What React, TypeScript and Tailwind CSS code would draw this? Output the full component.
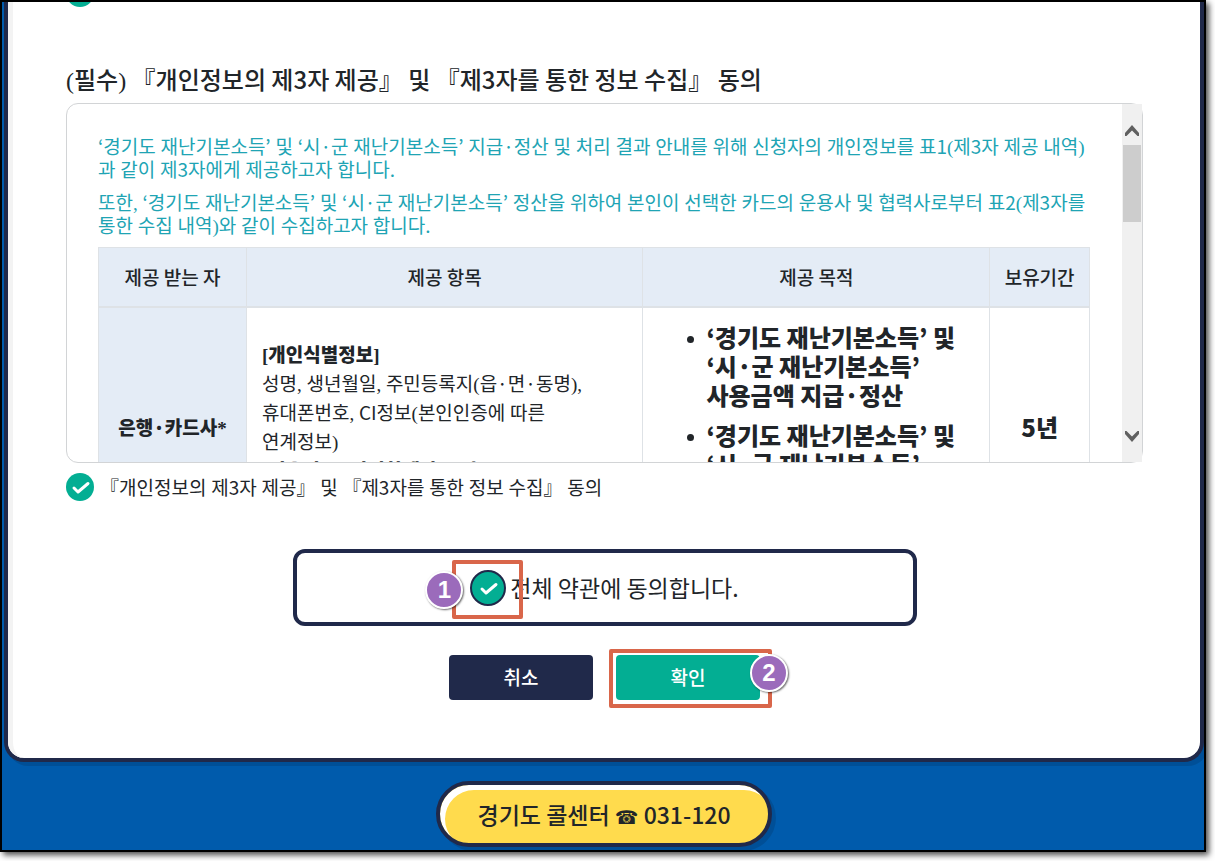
import React, { useState } from "react";

const PUNCTUATION = /([(),*[\]])/;
const PUNCTUATION_AND_SPACES = /([(),*[\] ])/;

// Brackets and commas are set in the serif face, the rest in the Korean one.
const Mixed: React.FC<{ text: string; spaces?: boolean }> = ({ text, spaces = true }) => {
  const pattern = spaces ? PUNCTUATION_AND_SPACES : PUNCTUATION;
  return (
    <>
      {text.split(pattern).map((part, i) =>
        pattern.test(part) ? (
          <span key={i} className="font-['Liberation_Serif',serif] leading-none">
            {part}
          </span>
        ) : (
          part
        )
      )}
    </>
  );
};

const StepBadge: React.FC<{ n: number; className: string }> = ({ n, className }) => (
  <span
    className={`absolute flex h-[38px] w-[38px] items-center justify-center rounded-full border-2 border-white bg-[#9b6bbb] font-['Liberation_Sans',sans-serif] text-2xl font-bold text-white shadow-[1px_1px_2px_rgba(0,0,0,0.6)] ${className}`}
  >
    {n}
  </span>
);

const CheckMark: React.FC<{ className: string }> = ({ className }) => (
  <svg viewBox="0 0 28 28" className={`pointer-events-none absolute inset-0 h-full w-full ${className}`} aria-hidden="true">
    <path d="M8 15 L12 19 L22 10.500" fill="none" stroke="white" strokeWidth="3" strokeLinecap="round" strokeLinejoin="round" />
  </svg>
);

const PURPOSES = [
  ["‘경기도 재난기본소득’ 및", "‘시·군 재난기본소득’", "사용금액 지급·정산"],
  ["‘경기도 재난기본소득’ 및", "‘시·군 재난기본소득’"],
];

const ConsentBox: React.FC = () => (
  <div className="mt-2 flex h-[360px] rounded-xl border border-[#d2d4d6]">
    <div className="min-w-0 flex-1 overflow-hidden rounded-l-xl pt-[30px] pr-8 pl-[31px]">
      <p className="leading-[23px] text-[#20a4b4]">
        <Mixed text="‘경기도 재난기본소득’ 및 ‘시·군 재난기본소득’ 지급·정산 및 처리 결과 안내를 위해 신청자의 개인정보를 표1(제3자 제공 내역)" />
        <br />
        <Mixed text="과 같이 제3자에게 제공하고자 합니다." />
      </p>
      <p className="mt-2.5 leading-[23px] text-[#20a4b4]">
        <Mixed text="또한, ‘경기도 재난기본소득’ 및 ‘시·군 재난기본소득’ 정산을 위하여 본인이 선택한 카드의 운용사 및 협력사로부터 표2(제3자를" />
        <br />
        <Mixed text="통한 수집 내역)와 같이 수집하고자 합니다." />
      </p>
      <table className="mt-[11px] w-full table-fixed border-collapse border border-[#dee2e6] leading-[29px]">
        <colgroup>
          <col className="w-[148px]" />
          <col className="w-[40%]" />
          <col className="w-[35%]" />
          <col />
        </colgroup>
        <thead>
          <tr className="h-[59px] border-b-2 border-[#dee2e6] bg-[#e4ecf6]">
            {["제공 받는 자", "제공 항목", "제공 목적", "보유기간"].map((title) => (
              <th key={title} className="border-x border-[#dee2e6] font-medium">
                {title}
              </th>
            ))}
          </tr>
        </thead>
        <tbody>
          <tr className="h-[240px]">
            <th className="border border-[#dee2e6] bg-[#e4ecf6] font-black">
              <Mixed text="은행·카드사*" />
            </th>
            <td className="border border-[#dee2e6] px-[15px] pt-[31px] align-top">
              <b className="font-black">
                <Mixed text="[개인식별정보]" />
              </b>
              <br />
              <Mixed text="성명, 생년월일, 주민등록지(읍·면·동명)," />
              <br />
              <Mixed text="휴대폰번호, CI정보(본인인증에 따른" />
              <br />
              <Mixed text="연계정보)" />
              <br />
              <b className="font-black">
                <Mixed text="[신용카드·지역화폐카드 정보]" />
              </b>
            </td>
            <td className="border border-[#dee2e6] pt-3.5 pl-11 align-top text-2xl leading-[29px] font-black">
              <ul>
                {PURPOSES.map((lines, i) => (
                  <li key={i} className="mb-[11px] flex gap-3">
                    <span className="mt-3.5 h-[7px] w-[7px] shrink-0 rounded-full bg-[#212529]" />
                    <span>
                      {lines.map((line) => (
                        <span key={line} className="block">
                          {line}
                        </span>
                      ))}
                    </span>
                  </li>
                ))}
              </ul>
            </td>
            <td className="border border-[#dee2e6] text-center text-2xl font-black">5년</td>
          </tr>
        </tbody>
      </table>
    </div>
    <div className="flex w-5 flex-col items-center bg-[#f0f0f0]">
      <button aria-label="위로" className="flex h-[41px] w-full items-end justify-center pb-[9px]">
        <svg viewBox="0 0 14 11" className="h-[11px] w-[14px]">
          <path d="M0 8 L7 0 L14 8 V11 H12.500 L7 5.500 L1.500 11 H0 Z" fill="#606060" />
        </svg>
      </button>
      <div className="h-[77px] w-[18px] bg-[#cdcdcd]" />
      <button aria-label="아래로" className="mt-auto flex h-[31px] w-full items-start justify-center">
        <svg viewBox="0 0 14 11" className="h-[11px] w-[14px]">
          <path d="M0 3 L7 11 L14 3 V0 H12.500 L7 5.500 L1.500 0 H0 Z" fill="#606060" />
        </svg>
      </button>
    </div>
  </div>
);

export default function App() {
  const [agreed, setAgreed] = useState(true);
  const [agreedAll, setAgreedAll] = useState(true);

  return (
    <div className="bg-white pr-[9px] pb-[9px] font-['Noto_Sans_CJK_KR',sans-serif] text-[19px] text-[#212529]">
      <div className="overflow-hidden border-2 border-black bg-[#005bac] pl-0.5 shadow-[3px_3px_6px_rgba(0,0,0,0.7)]">
        <main className="rounded-b-[20px] border-4 border-t-0 border-[#20294a] bg-white shadow-[4px_4px_0_rgba(0,0,0,0.12)]">
          <div className="rounded-bl-2xl border-l-[5px] border-[#f3f3f3] pr-[57px] pb-[58px] pl-[53px]">
            <div className="h-[5px] overflow-hidden">
              <div className="-mt-[23px] h-7 w-7 rounded-full bg-[#03ae93]" />
            </div>
            <h2 className="mt-14 text-2xl leading-8 font-medium">
              <Mixed text="(필수) 『개인정보의 제3자 제공』 및 『제3자를 통한 정보 수집』 동의" spaces={false} />
            </h2>
            <ConsentBox />
            <label className="mt-[9px] flex items-center gap-1.5 leading-[30px]">
              <span className="relative h-7 w-7">
                <input
                  type="checkbox"
                  checked={agreed}
                  onChange={(e) => setAgreed(e.target.checked)}
                  className="block h-7 w-7 appearance-none rounded-full bg-[#03ae93]"
                />
                <CheckMark className="" />
              </span>
              <span>
                <Mixed text="『개인정보의 제3자 제공』 및 『제3자를 통한 정보 수집』 동의" />
              </span>
            </label>
            <div className="mx-auto mt-[47px] flex h-[77px] max-w-[624px] items-center justify-center rounded-xl border-4 border-[#20294a]">
              <label className="flex items-center gap-1 text-[23px]">
                <span className="relative h-9 w-9">
                  <input
                    type="checkbox"
                    checked={agreedAll}
                    onChange={(e) => setAgreedAll(e.target.checked)}
                    className="block h-9 w-9 appearance-none rounded-full border-2 border-[#20294a] bg-[#03ae93]"
                  />
                  <CheckMark className="p-1" />
                  <span className="absolute -top-2.5 -left-[18px] z-10 h-[59px] w-[71px] rounded-xs border-4 border-[#d9664a]" />
                  <StepBadge n={1} className="top-px -left-[45px] z-20" />
                </span>
                전체 약관에 동의합니다.
              </label>
            </div>
            <div className="mt-[29px] flex justify-center gap-[23px] font-medium text-white">
              <button className="h-[45px] w-36 rounded bg-[#20294a]">취소</button>
              <div className="relative">
                <button className="h-[45px] w-36 rounded bg-[#03ae93]">확인</button>
                <span className="absolute -top-1.5 -left-[7px] h-[59px] w-[163px] rounded-xs border-4 border-[#d9664a]" />
                <StepBadge n={2} className="-top-px left-[134px]" />
              </div>
            </div>
          </div>
        </main>
        <footer className="flex justify-center pt-[19px] pb-[3px]">
          <a
            href="tel:031-120"
            className="flex h-[66px] w-[336px] items-center justify-center rounded-full border-4 border-[#20294a] bg-[#ffdb4d] text-[23px] font-medium shadow-[4px_4px_0_rgba(0,0,0,0.12),inset_5px_5px_0_white]"
          >
            <span>
              경기도 콜센터 <span className="font-['DejaVu_Sans',sans-serif] text-[19px] leading-none font-bold">☎</span> 031-120
            </span>
          </a>
        </footer>
      </div>
    </div>
  );
}
